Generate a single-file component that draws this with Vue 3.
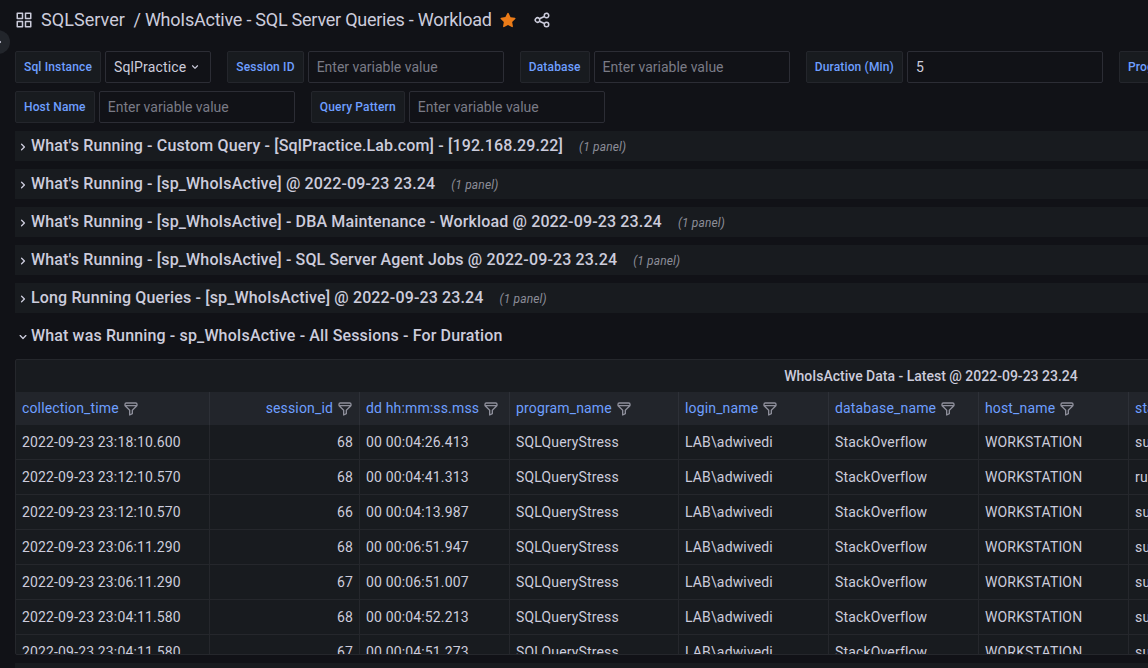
<script setup>
const icons = {
  apps: 'M10,13H3a1,1,0,0,0-1,1v7a1,1,0,0,0,1,1h7a1,1,0,0,0,1-1V14A1,1,0,0,0,10,13ZM9,20H4V15H9ZM21,2H14a1,1,0,0,0-1,1v7a1,1,0,0,0,1,1h7a1,1,0,0,0,1-1V3A1,1,0,0,0,21,2ZM20,9H15V4h5Zm1,4H14a1,1,0,0,0-1,1v7a1,1,0,0,0,1,1h7a1,1,0,0,0,1-1V14A1,1,0,0,0,21,13Zm-1,7H15V15h5ZM10,2H3A1,1,0,0,0,2,3v7a1,1,0,0,0,1,1h7a1,1,0,0,0,1-1V3A1,1,0,0,0,10,2ZM9,9H4V4H9Z',
  star: 'M22,9.67A1,1,0,0,0,21.14,9l-5.69-.83L12.9,3a1,1,0,0,0-1.8,0L8.55,8.16,2.86,9a1,1,0,0,0-.81.68,1,1,0,0,0,.25,1l4.13,4-1,5.68A1,1,0,0,0,6.9,21.44L12,18.77l5.1,2.67a.93.93,0,0,0,.46.12,1,1,0,0,0,.59-.19,1,1,0,0,0,.4-1l-1-5.68,4.13-4A1,1,0,0,0,22,9.67Z',
  share: 'M18,14a4,4,0,0,0-3.08,1.48l-5.1-2.35a3.64,3.64,0,0,0,0-2.26l5.1-2.35A4,4,0,1,0,14,6a4.17,4.17,0,0,0,.07.71L8.79,9.14a4,4,0,1,0,0,5.72l5.28,2.43A4.17,4.17,0,0,0,14,18a4,4,0,1,0,4-4ZM18,4a2,2,0,1,1-2,2A2,2,0,0,1,18,4ZM6,14a2,2,0,1,1,2-2A2,2,0,0,1,6,14Zm12,6a2,2,0,1,1,2-2A2,2,0,0,1,18,20Z',
  down: 'M17,9.17a1,1,0,0,0-1.41,0L12,12.71,8.46,9.17a1,1,0,0,0-1.41,0,1,1,0,0,0,0,1.42l4.24,4.24a1,1,0,0,0,1.42,0L17,10.59A1,1,0,0,0,17,9.17Z',
  right: 'M14.83,11.29,10.59,7.05a1,1,0,0,0-1.42,0,1,1,0,0,0,0,1.41L12.71,12,9.17,15.54a1,1,0,0,0,0,1.41,1,1,0,0,0,.71.29,1,1,0,0,0,.71-.29l4.24-4.24A1,1,0,0,0,14.83,11.29Z',
  filter: 'M19,2H5A3,3,0,0,0,2,5V6.17a3,3,0,0,0,.25,1.2l0,.06a2.81,2.81,0,0,0,.59.86L9,14.41V21a1,1,0,0,0,.47.85A1,1,0,0,0,10,22a1,1,0,0,0,.45-.11l4-2A1,1,0,0,0,15,19V14.41l6.12-6.12a2.81,2.81,0,0,0,.59-.86l0-.06A3,3,0,0,0,22,6.17V5A3,3,0,0,0,19,2ZM13.29,13.29A1,1,0,0,0,13,14v4.38l-2,1V14a1,1,0,0,0-.29-.71L5.41,8H18.59ZM20,6H4V5A1,1,0,0,1,5,4H19a1,1,0,0,1,1,1Z',
}

const variableLines = [
  [
    { label: 'Sql Instance', select: 'SqlPractice' },
    { label: 'Session ID' },
    { label: 'Database' },
    { label: 'Duration (Min)', value: '5' },
    { label: 'Program' },
  ],
  [{ label: 'Host Name' }, { label: 'Query Pattern' }],
]

const collapsedRows = [
  "What's Running - Custom Query - [SqlPractice.Lab.com] - [192.168.29.22]",
  "What's Running - [sp_WhoIsActive] @ 2022-09-23 23.24",
  "What's Running - [sp_WhoIsActive] - DBA Maintenance - Workload @ 2022-09-23 23.24",
  "What's Running - [sp_WhoIsActive] - SQL Server Agent Jobs @ 2022-09-23 23.24",
  'Long Running Queries - [sp_WhoIsActive] @ 2022-09-23 23.24',
]

const columns = [
  'collection_time',
  'session_id',
  'dd hh:mm:ss.mss',
  'program_name',
  'login_name',
  'database_name',
  'host_name',
  'status',
]

const sessions = [
  ['23:18:10.600', '68', '00:04:26.413', 'suspended'],
  ['23:12:10.570', '68', '00:04:41.313', 'running'],
  ['23:12:10.570', '66', '00:04:13.987', 'suspended'],
  ['23:06:11.290', '68', '00:06:51.947', 'suspended'],
  ['23:06:11.290', '67', '00:06:51.007', 'suspended'],
  ['23:04:11.580', '68', '00:04:52.213', 'suspended'],
  ['23:04:11.580', '67', '00:04:51.273', 'suspended'],
].map(([time, id, elapsed, status]) => [
  `2022-09-23 ${time}`,
  id,
  `00 ${elapsed}`,
  'SQLQueryStress',
  'LAB\\adwivedi',
  'StackOverflow',
  'WORKSTATION',
  status,
])
</script>

<template>
  <div class="dashboard">
    <div class="sidebar-toggle">
      <svg class="icon i16" viewBox="0 0 24 24"><path :d="icons.right" /></svg>
    </div>

    <header class="toolbar">
      <svg class="icon apps" viewBox="0 0 24 24"><path :d="icons.apps" /></svg>
      <span class="folder">SQLServer</span>
      <span class="title">/ WhoIsActive - SQL Server Queries - Workload</span>
      <svg class="icon star" viewBox="0 0 24 24"><path :d="icons.star" /></svg>
      <svg class="icon share" viewBox="0 0 24 24"><path :d="icons.share" /></svg>
    </header>

    <div class="canvas">
      <div class="variables">
        <div v-for="(line, i) in variableLines" :key="i" class="variable-line">
          <div v-for="v in line" :key="v.label" class="variable">
            <label class="variable-label">{{ v.label }}</label>
            <div v-if="v.select" class="field select">
              {{ v.select }}
              <svg class="icon caret" viewBox="0 0 24 24"><path :d="icons.down" /></svg>
            </div>
            <div v-else-if="v.value" class="field input">{{ v.value }}</div>
            <div v-else class="field input placeholder">Enter variable value</div>
          </div>
        </div>
      </div>

      <div class="rows">
        <div v-for="row in collapsedRows" :key="row" class="row collapsed">
          <svg class="icon i16" viewBox="0 0 24 24"><path :d="icons.right" /></svg>
          <span class="row-title">{{ row }}</span>
          <span class="row-count">(1 panel)</span>
        </div>
        <div class="row">
          <svg class="icon i16" viewBox="0 0 24 24"><path :d="icons.down" /></svg>
          <span class="row-title">What was Running - sp_WhoIsActive - All Sessions - For Duration</span>
        </div>
      </div>

      <section class="panel">
        <h2 class="panel-title">WhoIsActive Data - Latest @ 2022-09-23 23.24</h2>
        <div class="grid head">
          <div v-for="c in columns" :key="c" class="cell">
            <span class="column-name">{{ c }}</span>
            <svg class="icon filter" viewBox="0 0 24 24"><path :d="icons.filter" /></svg>
          </div>
        </div>
        <div v-for="(s, i) in sessions" :key="i" class="grid body">
          <div v-for="(value, j) in s" :key="j" class="cell">{{ value }}</div>
        </div>
      </section>

      <div class="row collapsed next"></div>
    </div>
  </div>
</template>

<style>
html,
body {
  background: #111217;
  overflow: hidden;
}
</style>

<style scoped>
.dashboard {
  position: relative;
  width: 1148px;
  height: 668px;
  overflow: hidden;
  background: #111217;
  color: #ccccdc;
  font-family: Roboto, "Liberation Sans", sans-serif;
  font-size: 14px;
  line-height: 22px;
  letter-spacing: 0.14994px;
}
.dashboard * {
  box-sizing: border-box;
}
.icon {
  display: block;
  flex: none;
  fill: currentColor;
}
.i16 {
  width: 16px;
  height: 16px;
}
.sidebar-toggle {
  position: absolute;
  left: -14px;
  top: 30px;
  width: 24px;
  height: 24px;
  border-radius: 50%;
  background: #22252b;
  display: flex;
  align-items: center;
  justify-content: center;
}
.sidebar-toggle .icon {
  margin-left: 2px;
}
.toolbar {
  display: flex;
  align-items: center;
  height: 39px;
  padding-left: 15px;
  font-size: 18px;
  letter-spacing: 0;
  white-space: pre;
}
.apps {
  width: 18px;
  height: 18px;
}
.folder {
  margin-left: 8px;
  letter-spacing: 0.05px;
}
.title {
  margin-left: 8.5px;
  letter-spacing: -0.24px;
}
.star {
  width: 18px;
  height: 18px;
  margin-left: 7.5px;
  color: #eb7b18;
}
.share {
  width: 18px;
  height: 18px;
  margin-left: 16px;
}
.canvas {
  width: 1832px;
  margin: 12px 0 0 15px;
}
.variables {
  display: flex;
  flex-direction: column;
  gap: 8px;
}
.variable-line {
  display: flex;
  gap: 16px;
}
.variable {
  display: flex;
  gap: 4px;
}
.variable-label,
.field {
  height: 32px;
  display: flex;
  align-items: center;
  padding: 0 8px;
  border: 1px solid #2c2d35;
  border-radius: 2px;
  white-space: nowrap;
}
.variable-label {
  background: #181b1f;
  border-color: #24262c;
  color: #6e9fff;
  font-size: 12px;
  font-weight: 500;
}
.input {
  width: 196.15px;
  letter-spacing: 0;
}
.placeholder {
  color: #7a7b86;
}
.caret {
  width: 14px;
  height: 14px;
  margin-left: 2px;
}
.rows {
  display: flex;
  flex-direction: column;
  gap: 8px;
  margin-top: 8px;
}
.row {
  display: flex;
  align-items: center;
  height: 30px;
}
.collapsed {
  background: #181b1f;
}
.row .icon {
  margin-top: 2px;
}
.row-title {
  font-size: 16px;
  font-weight: 500;
  letter-spacing: 0.143px;
}
.row-count {
  margin: 2px 0 0 16px;
  font-size: 12px;
  font-style: italic;
  color: #8c8d98;
}
.panel {
  height: 296px;
  margin-top: 8px;
  overflow: hidden;
  background: #181b1f;
  border: 1px solid #25272c;
  border-radius: 2px;
}
.panel-title {
  margin: 0;
  height: 32px;
  line-height: 32px;
  text-align: center;
  font-size: 14px;
  font-weight: 500;
  letter-spacing: 0;
}
.grid {
  display: grid;
  grid-template-columns: 194px 150px 150px 169px 150px 150px 150px 1fr;
}
.head {
  height: 33px;
  background: #22252b;
  color: #6e9fff;
}
.body {
  height: 35px;
  border-bottom: 1px solid #25272c;
}
.cell {
  display: flex;
  align-items: center;
  padding: 0 6px;
  border-right: 1px solid #25272c;
  white-space: nowrap;
}
.head .cell {
  border-right-color: #2d3037;
}
.column-name {
  margin-bottom: 2px;
}
.cell:nth-child(2) {
  justify-content: flex-end;
}
.filter {
  width: 16px;
  height: 16px;
  margin-left: 4px;
  color: #8e8f9b;
}
.next {
  margin-top: 8px;
}
</style>
